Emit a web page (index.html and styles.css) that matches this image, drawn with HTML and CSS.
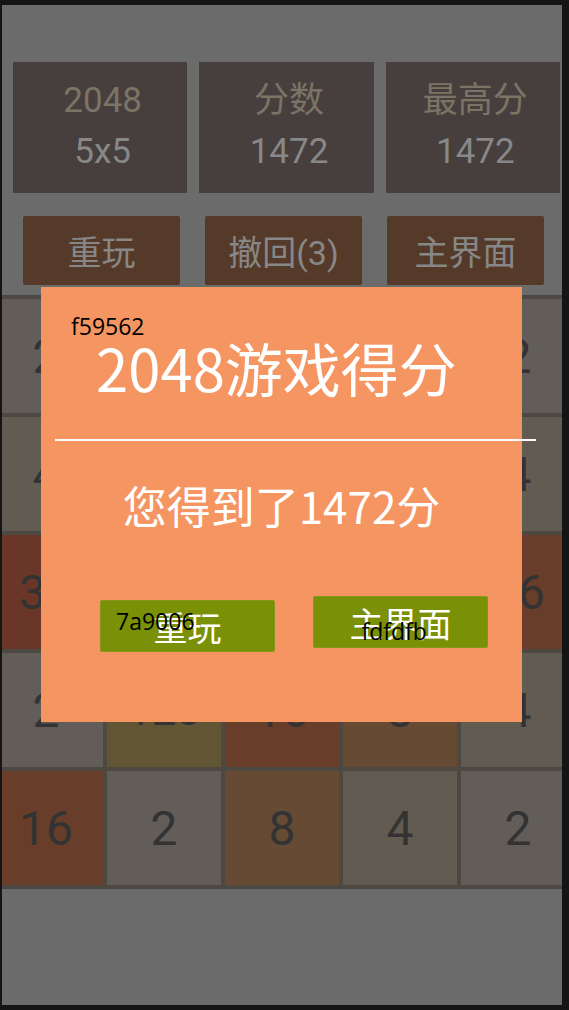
FILE: index.html
```html
<!DOCTYPE html>
<html lang="zh">
<head>
<meta charset="utf-8">
<title>2048</title>
<link rel="stylesheet" href="styles.css">
</head>
<body>
<div class="screen">
  <div class="stats">
    <div class="stat"><div class="stat-label">2048</div><div class="stat-value">5x5</div></div>
    <div class="stat"><div class="stat-label">分数</div><div class="stat-value">1472</div></div>
    <div class="stat"><div class="stat-label">最高分</div><div class="stat-value">1472</div></div>
  </div>
  <div class="actions">
    <div class="action">重玩</div>
    <div class="action">撤回(3)</div>
    <div class="action">主界面</div>
  </div>
  <div class="board">
    <div class="tile t2">2</div><div class="tile t4">4</div><div class="tile t8">8</div><div class="tile t4">4</div><div class="tile t2">2</div>
    <div class="tile t4">4</div><div class="tile t2">2</div><div class="tile t16">16</div><div class="tile t8">8</div><div class="tile t4">4</div>
    <div class="tile t32">32</div><div class="tile t64">64</div><div class="tile t8">8</div><div class="tile t2">2</div><div class="tile t16">16</div>
    <div class="tile t2">2</div><div class="tile t128">128</div><div class="tile t16">16</div><div class="tile t8">8</div><div class="tile t4">4</div>
    <div class="tile t16">16</div><div class="tile t2">2</div><div class="tile t8">8</div><div class="tile t4">4</div><div class="tile t2">2</div>
  </div>
  <div class="dialog">
    <span class="hex hex-dialog">f59562</span>
    <h1 class="dialog-title">2048游戏得分</h1>
    <hr class="dialog-rule">
    <p class="dialog-text">您得到了1472分</p>
    <div class="dialog-buttons">
      <div class="dlg-btn dlg-btn-replay">重玩<span class="hex">7a9006</span></div>
      <div class="dlg-btn dlg-btn-home">主界面<span class="hex">fdfdfb</span></div>
    </div>
  </div>
</div>
</body>
</html>
```
FILE: styles.css
```css
html, body {
  margin: 0;
  padding: 0;
}
body {
  background: #151515;
  width: 569px;
  height: 1010px;
  overflow: hidden;
}
.screen {
  position: relative;
  margin: 5px 0 0 2px;
  width: 560px;
  height: 1000px;
  background: #6b6b6b;
  overflow: hidden;
  font-family: Roboto, "Noto Sans CJK SC", sans-serif;
}
.stats {
  display: flex;
  gap: 12px;
  padding: 57px 2px 0 11px;
}
.stat {
  flex: 1;
  height: 131px;
  box-sizing: border-box;
  padding: 12.5px 0 0 5px;
  background: #463f3e;
  text-align: center;
  font-size: 35px;
  line-height: 51px;
}
.stat-label {
  color: #7b7465;
}
.stat-value {
  color: #888888;
}
.actions {
  display: flex;
  gap: 25px;
  padding: 23px 0 0 21px;
}
.action {
  width: 157px;
  height: 69px;
  background: #553a29;
  border-radius: 2px;
  color: #878787;
  font-size: 34px;
  display: flex;
  align-items: center;
  justify-content: center;
}
.board {
  margin: 10px 0 0 -17px;
  width: 594px;
  height: 594px;
  box-sizing: border-box;
  padding: 4px;
  display: grid;
  grid-template-columns: repeat(5, 114px);
  grid-template-rows: repeat(5, 114px);
  gap: 4px;
  background: #4e4843;
}
.tile {
  display: flex;
  align-items: center;
  justify-content: center;
  font-size: 48px;
  color: #333333;
}
.t2 { background: #625d59; }
.t4 { background: #625b51; }
.t8 { background: #664a33; }
.t16 { background: #683d2a; }
.t32 { background: #6a3627; }
.t64 { background: #692818; }
.t128 { background: #625533; font-size: 44px; }

.dialog {
  position: absolute;
  left: 39px;
  top: 282px;
  width: 481px;
  height: 435px;
  box-sizing: border-box;
  padding-top: 45px;
  background: #f59562;
  font-family: "Noto Sans CJK SC", sans-serif;
  color: #ffffff;
}
.dialog-title {
  margin: 0;
  padding-right: 10px;
  font-size: 58px;
  font-weight: 400;
  line-height: 70px;
  text-align: center;
}
.dialog-rule {
  margin: 37px 0 0 14px;
  width: 100%;
  height: 2px;
  border: 0;
  background: #fdfdfb;
}
.dialog-text {
  margin: 34px 0 0;
  font-size: 44px;
  font-weight: 400;
  line-height: 60px;
  text-align: center;
}
.dialog-buttons {
  display: flex;
  align-items: flex-start;
  gap: 38px;
  margin-top: 61px;
  padding-left: 59px;
}
.dlg-btn {
  position: relative;
  width: 175px;
  height: 52px;
  box-sizing: border-box;
  border: 1px solid #84971a;
  border-radius: 2px;
  background: #7a9006;
  font-size: 34px;
  font-weight: 400;
  display: flex;
  align-items: center;
  justify-content: center;
}
.dlg-btn-replay {
  margin-top: 4px;
}
.hex {
  position: absolute;
  font-family: "Open Sans", sans-serif;
  font-size: 23px;
  font-weight: 400;
  line-height: 23px;
  color: #000000;
  white-space: nowrap;
}
.hex-dialog {
  left: 30px;
  top: 27.5px;
}
.dlg-btn-replay .hex {
  left: 15px;
  top: 8.5px;
}
.dlg-btn-home .hex {
  left: 47.5px;
  top: 22.5px;
}
```
